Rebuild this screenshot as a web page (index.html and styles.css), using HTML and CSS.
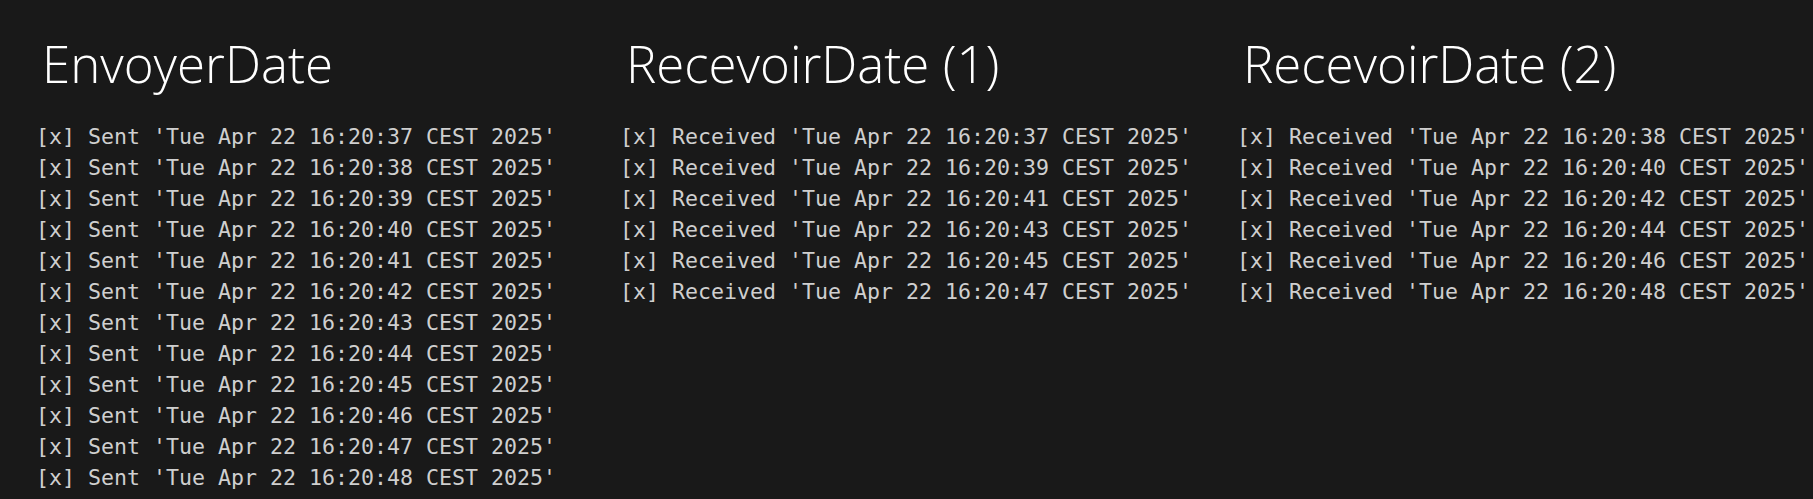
FILE: index.html
```html
<!DOCTYPE html>
<html lang="fr">
<head>
<meta charset="utf-8">
<title>Dates</title>
<link rel="stylesheet" href="styles.css">
</head>
<body>
<main class="panes">
  <section class="pane pane-send">
    <h1 class="pane-title">EnvoyerDate</h1>
    <pre class="log">[x] Sent 'Tue Apr 22 16:20:37 CEST 2025'
[x] Sent 'Tue Apr 22 16:20:38 CEST 2025'
[x] Sent 'Tue Apr 22 16:20:39 CEST 2025'
[x] Sent 'Tue Apr 22 16:20:40 CEST 2025'
[x] Sent 'Tue Apr 22 16:20:41 CEST 2025'
[x] Sent 'Tue Apr 22 16:20:42 CEST 2025'
[x] Sent 'Tue Apr 22 16:20:43 CEST 2025'
[x] Sent 'Tue Apr 22 16:20:44 CEST 2025'
[x] Sent 'Tue Apr 22 16:20:45 CEST 2025'
[x] Sent 'Tue Apr 22 16:20:46 CEST 2025'
[x] Sent 'Tue Apr 22 16:20:47 CEST 2025'
[x] Sent 'Tue Apr 22 16:20:48 CEST 2025'</pre>
  </section>
  <section class="pane pane-recv1">
    <h1 class="pane-title">RecevoirDate (1)</h1>
    <pre class="log">[x] Received 'Tue Apr 22 16:20:37 CEST 2025'
[x] Received 'Tue Apr 22 16:20:39 CEST 2025'
[x] Received 'Tue Apr 22 16:20:41 CEST 2025'
[x] Received 'Tue Apr 22 16:20:43 CEST 2025'
[x] Received 'Tue Apr 22 16:20:45 CEST 2025'
[x] Received 'Tue Apr 22 16:20:47 CEST 2025'</pre>
  </section>
  <section class="pane pane-recv2">
    <h1 class="pane-title">RecevoirDate (2)</h1>
    <pre class="log">[x] Received 'Tue Apr 22 16:20:38 CEST 2025'
[x] Received 'Tue Apr 22 16:20:40 CEST 2025'
[x] Received 'Tue Apr 22 16:20:42 CEST 2025'
[x] Received 'Tue Apr 22 16:20:44 CEST 2025'
[x] Received 'Tue Apr 22 16:20:46 CEST 2025'
[x] Received 'Tue Apr 22 16:20:48 CEST 2025'</pre>
  </section>
</main>
</body>
</html>
```
FILE: styles.css
```css
html, body {
  margin: 0;
  padding: 0;
  background: #191919;
}

body {
  width: 1813px;
  height: 499px;
  overflow: hidden;
}

.panes {
  display: grid;
  grid-template-columns: 584px 617px 1fr;
  padding: 38px 0 0 36px;
}

.pane {
  display: flex;
  flex-direction: column;
  gap: 32px;
  min-width: 0;
}

.pane-title {
  margin: 0;
  padding-left: 6px;
  font-family: "Open Sans", "Noto Sans", sans-serif;
  font-weight: 350;
  font-size: 51px;
  line-height: 51px;
  letter-spacing: 0;
  color: #ffffff;
  white-space: nowrap;
}

.log {
  margin: 0;
  font-family: "DejaVu Sans Mono", monospace;
  font-size: 21.6px;
  line-height: 31px;
  color: #cfcfcf;
  white-space: pre;
}
```
